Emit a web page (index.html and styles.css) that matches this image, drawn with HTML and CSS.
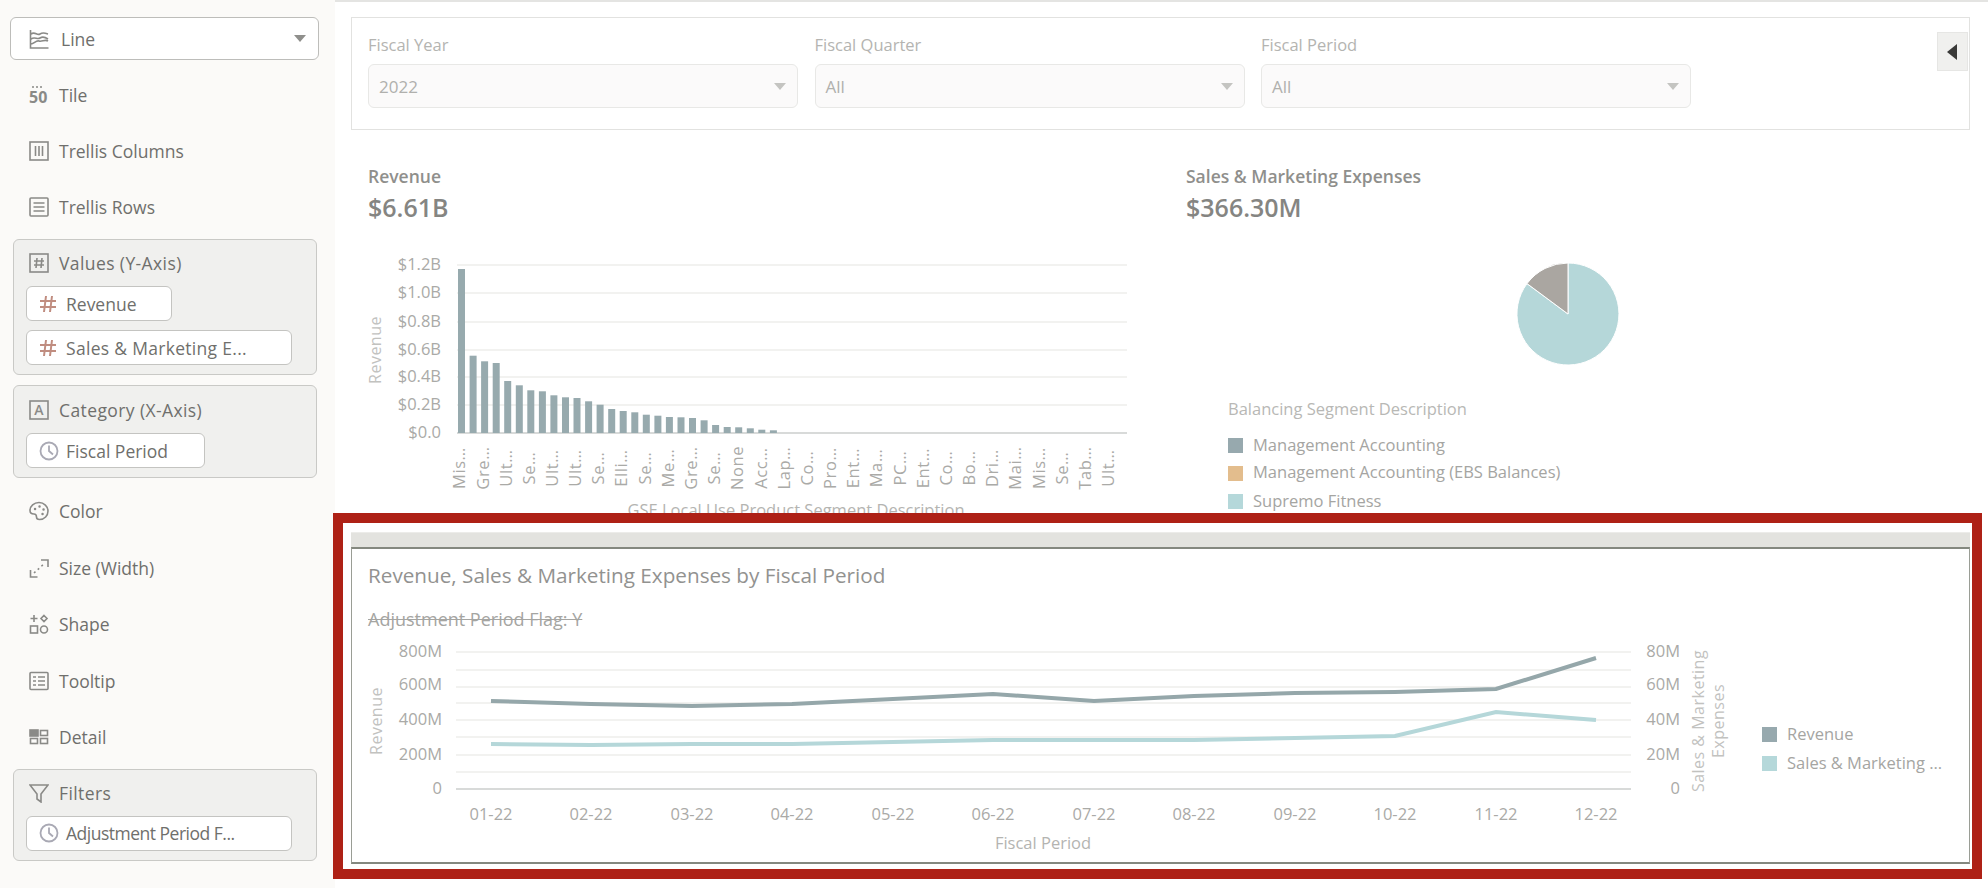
FILE: index.html
```html
<!DOCTYPE html>
<html>
<head>
  <title>Revenue Workbook</title>
  <link rel="stylesheet" href="styles.css">
</head>
<body>
  <aside class="sidebar">
    <div class="chart-type">
      <svg class="icon" viewBox="0 0 20 20"><path d="M1.500 1v18h18M2 5c4-3 6 2 9 0s5-1 8 0M2 10c4-3 6 1 9-1s5-1 8 1M2 15c3 0 5-4 8-3s6-2 9 0"/></svg>
      <span>Line</span>
      <i class="caret"></i>
    </div>
    <div class="item">
      <span class="icon-fifty">50</span>
      <span>Tile</span>
    </div>
    <div class="item">
      <svg class="icon" viewBox="0 0 20 20"><rect x="1" y="1" width="18" height="18"/><path d="M6.500 5v10M10 5v10M13.500 5v10"/></svg>
      <span>Trellis Columns</span>
    </div>
    <div class="item">
      <svg class="icon" viewBox="0 0 20 20"><rect x="1" y="1" width="18" height="18" rx="1"/><path d="M4.500 6h11M4.500 10h11M4.500 14h11"/></svg>
      <span>Trellis Rows</span>
    </div>
    <div class="group">
      <div class="group-head">
        <svg class="icon" viewBox="0 0 20 20"><rect x="1" y="1" width="18" height="18"/><path d="M8 5l-1 10M13 5l-1 10M5 8h10M5 12h10"/></svg>
        <span>Values (Y-Axis)</span>
      </div>
      <div class="chip chip-revenue">
        <svg class="chip-icon hash" viewBox="0 0 18 18"><path d="M7 1L5 17M13 1l-2 16M1 6h16M1 12h16"/></svg>
        <span>Revenue</span>
      </div>
      <div class="chip chip-wide">
        <svg class="chip-icon hash" viewBox="0 0 18 18"><path d="M7 1L5 17M13 1l-2 16M1 6h16M1 12h16"/></svg>
        <span class="chip-sales">Sales &amp; Marketing E...</span>
      </div>
    </div>
    <div class="group group-category">
      <div class="group-head">
        <svg class="icon" viewBox="0 0 20 20"><rect x="1" y="1" width="18" height="18"/><text class="icon-letter" x="10" y="15">A</text></svg>
        <span>Category (X-Axis)</span>
      </div>
      <div class="chip chip-period">
        <svg class="chip-icon clock" viewBox="0 0 20 20"><circle cx="10" cy="10" r="8.500"/><path d="M10 4.500V10l4 3.500"/></svg>
        <span>Fiscal Period</span>
      </div>
    </div>
    <div class="lower">
      <div class="item">
        <svg class="icon" viewBox="0 0 20 20"><path d="M10 1.500c-5 0-9 3.500-9 8 0 3 2 3.500 4 3.500 2.500 0 2.500 1.500 2.500 3 0 1.500 1 2.500 3 2.500 5 0 8.500-4 8.500-8.500S15 1.500 10 1.500z"/><path class="dots-thick" d="M6 8h.1M10.500 5.500h.1M14.500 8.500h.1M13.500 13h.1"/></svg>
        <span>Color</span>
      </div>
      <div class="item">
        <svg class="icon" viewBox="0 0 20 20"><path d="M1.500 12v7h7M12 2h7v7"/><path class="dash" d="M5 15L16 5"/></svg>
        <span>Size (Width)</span>
      </div>
      <div class="item">
        <svg class="icon" viewBox="0 0 20 20"><path d="M5 1v7M1.500 4.500h7M15 1.500l3 3-3 3-3-3z"/><rect x="1.500" y="12" width="7" height="7"/><circle cx="15" cy="15.500" r="3.500"/></svg>
        <span>Shape</span>
      </div>
      <div class="item">
        <svg class="icon" viewBox="0 0 20 20"><rect x="1" y="1.500" width="18" height="17" rx="1"/><path d="M4 6h3M9 6h7M4 10h3M9 10h7M4 14h3M9 14h7"/></svg>
        <span>Tooltip</span>
      </div>
      <div class="item">
        <svg class="icon" viewBox="0 0 20 20"><rect class="solid" x="1" y="3" width="8" height="6"/><rect x="11.500" y="3.500" width="7" height="5"/><rect x="1.500" y="11.500" width="7" height="5"/><rect x="11.500" y="11.500" width="7" height="5"/></svg>
        <span>Detail</span>
      </div>
    </div>
    <div class="group group-filters">
      <div class="group-head">
        <svg class="icon" viewBox="0 0 20 20"><path d="M1 2h18l-7 9v8l-4-3v-5z"/></svg>
        <span>Filters</span>
      </div>
      <div class="chip chip-wide">
        <svg class="chip-icon clock" viewBox="0 0 20 20"><circle cx="10" cy="10" r="8.500"/><path d="M10 4.500V10l4 3.500"/></svg>
        <span class="chip-adjust">Adjustment Period F...</span>
      </div>
    </div>
  </aside>

  <main class="main">
    <section class="canvas">
      <div class="filter-bar">
        <div class="field">
          <label>Fiscal Year</label>
          <div class="field-input"><span>2022</span><i class="caret"></i></div>
        </div>
        <div class="field">
          <label>Fiscal Quarter</label>
          <div class="field-input"><span>All</span><i class="caret"></i></div>
        </div>
        <div class="field">
          <label>Fiscal Period</label>
          <div class="field-input"><span>All</span><i class="caret"></i></div>
        </div>
        <div class="collapse"><i></i></div>
      </div>

      <div class="tiles">
        <div class="tile tile-left">
          <div class="tile-head">
            <div class="tile-name">Revenue</div>
            <div class="tile-value">$6.61B</div>
          </div>
          <svg class="chart" width="818" height="273" viewBox="351 240 818 273">
            <g class="grid">
              <path d="M457 265h670M457 293h670M457 322h670M457 350h670M457 377h670M457 405h670"/>
            </g>
            <path class="base" d="M457 433h670"/>
            <g class="bars">
              <rect x="458" y="269" width="7" height="164"/>
              <rect x="469.600" y="355.700" width="7" height="77.300"/>
              <rect x="481.100" y="361.300" width="7" height="71.700"/>
              <rect x="492.700" y="363" width="7" height="70"/>
              <rect x="504.200" y="381" width="7" height="52"/>
              <rect x="515.800" y="385.300" width="7" height="47.700"/>
              <rect x="527.300" y="390.300" width="7" height="42.700"/>
              <rect x="538.900" y="391.300" width="7" height="41.700"/>
              <rect x="550.400" y="395.300" width="7" height="37.700"/>
              <rect x="562" y="397.300" width="7" height="35.700"/>
              <rect x="573.500" y="398" width="7" height="35"/>
              <rect x="585.100" y="401.300" width="7" height="31.700"/>
              <rect x="596.600" y="404.700" width="7" height="28.300"/>
              <rect x="608.200" y="409" width="7" height="24"/>
              <rect x="619.700" y="411" width="7" height="22"/>
              <rect x="631.300" y="412.300" width="7" height="20.700"/>
              <rect x="642.800" y="414.700" width="7" height="18.300"/>
              <rect x="654.400" y="415.700" width="7" height="17.300"/>
              <rect x="665.900" y="417" width="7" height="16"/>
              <rect x="677.500" y="417.300" width="7" height="15.700"/>
              <rect x="689" y="418" width="7" height="15"/>
              <rect x="700.600" y="420.300" width="7" height="12.700"/>
              <rect x="712.100" y="425" width="7" height="8"/>
              <rect x="723.700" y="427" width="7" height="6"/>
              <rect x="735.200" y="427.300" width="7" height="5.700"/>
              <rect x="746.800" y="428.300" width="7" height="4.700"/>
              <rect x="758.300" y="429.700" width="7" height="3.300"/>
              <rect x="769.900" y="430.300" width="7" height="2.700"/>
            </g>
            <g class="tick end">
              <text x="441" y="270">$1.2B</text>
              <text x="441" y="298">$1.0B</text>
              <text x="441" y="327">$0.8B</text>
              <text x="441" y="355">$0.6B</text>
              <text x="441" y="382">$0.4B</text>
              <text x="441" y="410">$0.2B</text>
              <text x="441" y="438">$0.0</text>
            </g>
            <text class="axis-title mid" transform="translate(381 350) rotate(-90)">Revenue</text>
            <g class="tick mid rot">
              <text transform="translate(465 468) rotate(-90)">Mis…</text>
              <text transform="translate(489 468) rotate(-90)">Gre…</text>
              <text transform="translate(512 468) rotate(-90)">Ult…</text>
              <text transform="translate(535 468) rotate(-90)">Se…</text>
              <text transform="translate(558 468) rotate(-90)">Ult…</text>
              <text transform="translate(581 468) rotate(-90)">Ult…</text>
              <text transform="translate(604 468) rotate(-90)">Se…</text>
              <text transform="translate(627 468) rotate(-90)">Elli…</text>
              <text transform="translate(651 468) rotate(-90)">Se…</text>
              <text transform="translate(674 468) rotate(-90)">Me…</text>
              <text transform="translate(697 468) rotate(-90)">Gre…</text>
              <text transform="translate(720 468) rotate(-90)">Se…</text>
              <text transform="translate(743 468) rotate(-90)">None</text>
              <text transform="translate(767 468) rotate(-90)">Acc…</text>
              <text transform="translate(790 468) rotate(-90)">Lap…</text>
              <text transform="translate(813 468) rotate(-90)">Co…</text>
              <text transform="translate(836 468) rotate(-90)">Pro…</text>
              <text transform="translate(859 468) rotate(-90)">Ent…</text>
              <text transform="translate(882 468) rotate(-90)">Ma…</text>
              <text transform="translate(906 468) rotate(-90)">PC…</text>
              <text transform="translate(929 468) rotate(-90)">Ent…</text>
              <text transform="translate(952 468) rotate(-90)">Co…</text>
              <text transform="translate(975 468) rotate(-90)">Bo…</text>
              <text transform="translate(998 468) rotate(-90)">Dri…</text>
              <text transform="translate(1021 468) rotate(-90)">Mai…</text>
              <text transform="translate(1045 468) rotate(-90)">Mis…</text>
              <text transform="translate(1068 468) rotate(-90)">Se…</text>
              <text transform="translate(1091 468) rotate(-90)">Tab…</text>
              <text transform="translate(1114 468) rotate(-90)">Ult…</text>
            </g>
            <text class="axis-name mid" x="796" y="516">GSE Local Use Product Segment Description</text>
          </svg>
        </div>
        <div class="tile">
          <div class="tile-head">
            <div class="tile-name">Sales &amp; Marketing Expenses</div>
            <div class="tile-value">$366.30M</div>
          </div>
          <svg class="chart" width="801" height="273" viewBox="1169 240 801 273">
            <path class="pie-main" d="M1568 314L1568 263A51 51 0 1 1 1527 283.600Z"/>
            <path class="pie-other" d="M1568 314L1527 283.600A51 51 0 0 1 1568 263Z"/>
            <text class="legend-title" x="1228" y="415">Balancing Segment Description</text>
            <rect class="sw-revenue" x="1228" y="438" width="15" height="15"/>
            <text class="legend-text" x="1253" y="451">Management Accounting</text>
            <rect class="sw-ebs" x="1228" y="466" width="15" height="15"/>
            <text class="legend-text" x="1253" y="478">Management Accounting (EBS Balances)</text>
            <rect class="sw-sales" x="1228" y="494" width="15" height="15"/>
            <text class="legend-text" x="1253" y="507">Supremo Fitness</text>
          </svg>
        </div>
      </div>
    </section>

    <section class="highlight">
      <div class="band"></div>
      <div class="panel">
        <div class="panel-title">Revenue, Sales &amp; Marketing Expenses by Fiscal Period</div>
        <div class="panel-sub">Adjustment Period Flag: Y</div>
        <svg class="chart" width="1617" height="222" viewBox="352 640 1617 222">
          <g class="grid">
            <path d="M456 652h1175M456 670h1175M456 687h1175M456 703h1175M456 720h1175M456 737h1175M456 755h1175M456 772h1175"/>
          </g>
          <path class="base" d="M456 789h1175"/>
          <polyline class="line-revenue" points="491,701 591,704 692,706 792,704 893,699 993,694 1094,701 1194,696 1295,693 1395,692 1496,689 1596,658"/>
          <polyline class="line-sales" points="491,744 591,745 692,744 792,744 893,742 993,740 1094,740 1194,740 1295,738 1395,736 1496,712 1596,720"/>
          <g class="tick end">
            <text x="442" y="657">800M</text>
            <text x="442" y="690">600M</text>
            <text x="442" y="725">400M</text>
            <text x="442" y="760">200M</text>
            <text x="442" y="794">0</text>
          </g>
          <g class="tick end">
            <text x="1680" y="657">80M</text>
            <text x="1680" y="690">60M</text>
            <text x="1680" y="725">40M</text>
            <text x="1680" y="760">20M</text>
            <text x="1680" y="794">0</text>
          </g>
          <text class="axis-title mid" transform="translate(382 721) rotate(-90)">Revenue</text>
          <text class="axis-title mid" transform="translate(1704 721) rotate(-90)">Sales &amp; Marketing</text>
          <text class="axis-title mid" transform="translate(1724 721) rotate(-90)">Expenses</text>
          <g class="tick mid">
            <text x="491" y="820">01-22</text>
            <text x="591" y="820">02-22</text>
            <text x="692" y="820">03-22</text>
            <text x="792" y="820">04-22</text>
            <text x="893" y="820">05-22</text>
            <text x="993" y="820">06-22</text>
            <text x="1094" y="820">07-22</text>
            <text x="1194" y="820">08-22</text>
            <text x="1295" y="820">09-22</text>
            <text x="1395" y="820">10-22</text>
            <text x="1496" y="820">11-22</text>
            <text x="1596" y="820">12-22</text>
          </g>
          <text class="axis-name mid" x="1043" y="849">Fiscal Period</text>
          <rect class="sw-revenue" x="1762" y="727" width="15" height="15"/>
          <text class="legend-text" x="1787" y="740">Revenue</text>
          <rect class="sw-sales" x="1762" y="756" width="15" height="15"/>
          <text class="legend-text" x="1787" y="769">Sales &amp; Marketing ...</text>
        </svg>
      </div>
    </section>
  </main>
</body>
</html>
```

FILE: styles.css
```css
* {
  box-sizing: border-box;
}

body {
  margin: 0;
  width: 1988px;
  height: 888px;
  display: flex;
  overflow: hidden;
  background: #fff;
  font-family: "Open Sans", "Noto Sans", sans-serif;
  color: #6f6f6c;
}

/* left panel */
.sidebar {
  width: 335px;
  height: 888px;
  flex: none;
  padding-top: 17px;
  background: #fbfaf8;
  font-size: 17.500px;
}

.icon {
  width: 20px;
  height: 20px;
  flex: none;
  fill: none;
  stroke: #8a8a87;
  stroke-width: 1.600;
}

.icon .dots-thick {
  stroke-width: 2.400;
  stroke-linecap: round;
}

.icon .dash {
  stroke-dasharray: 2 3;
}

.icon .solid {
  fill: #8a8a87;
}

.icon-fifty {
  width: 20px;
  flex: none;
  font-size: 16px;
  font-weight: 700;
  line-height: 16px;
  color: #8a8a87;
}

.icon-fifty::before {
  content: "";
  display: block;
  width: 10px;
  margin: 0 0 1px 3px;
  border-top: 2px dotted #a5a5a2;
}

.icon-letter {
  font-size: 14px;
  font-weight: 600;
  fill: #8a8a87;
  stroke: none;
  text-anchor: middle;
}

.chart-type {
  width: 309px;
  height: 43px;
  margin-left: 10px;
  padding: 0 12px 0 18px;
  display: flex;
  align-items: center;
  gap: 12px;
  background: #fff;
  border: 1px solid #bdbdba;
  border-radius: 6px;
}

.caret {
  width: 0;
  height: 0;
  margin-left: auto;
  border-left: 6px solid transparent;
  border-right: 6px solid transparent;
  border-top: 7px solid #8f8f8c;
}

.item {
  height: 56px;
  padding-left: 29px;
  display: flex;
  align-items: center;
  gap: 10px;
}

.chart-type + .item {
  margin-top: 7px;
}

.lower {
  margin-top: 5px;
}

.lower .item {
  height: 56.500px;
}

.group {
  width: 304px;
  margin: 4px 0 0 13px;
  padding: 0 12px 9px;
  background: #f0f0ee;
  border: 1px solid #c9c9c6;
  border-radius: 6px;
}

.group-category {
  margin-top: 10px;
}

.group-filters {
  margin-top: 3px;
}

.group-head {
  height: 46px;
  padding-left: 3px;
  display: flex;
  align-items: center;
  gap: 10px;
  letter-spacing: .4px;
}

.group-category .group-head {
  height: 47px;
}

.chip {
  height: 35px;
  padding-left: 12px;
  display: flex;
  align-items: center;
  gap: 9px;
  background: #fff;
  border: 1px solid #c4c4c1;
  border-radius: 6px;
  white-space: nowrap;
}

.chip + .chip {
  margin-top: 9px;
}

.chip-revenue {
  width: 146px;
}

.chip-wide {
  width: 266px;
}

.chip-period {
  width: 179px;
}

.chip-sales {
  letter-spacing: .3px;
}

.chip-adjust {
  letter-spacing: -.5px;
}

.chip-icon {
  width: 18px;
  height: 18px;
  flex: none;
  fill: none;
}

.hash {
  stroke: #c08d80;
  stroke-width: 2;
}

.clock {
  width: 20px;
  height: 20px;
  margin-right: -2px;
  stroke: #a9a9b4;
  stroke-width: 1.800;
}

/* main area */
.main {
  width: 1653px;
  flex: none;
}

.canvas {
  height: 513px;
  padding: 15px 18px 0 16px;
  overflow: hidden;
  border-top: 2px solid #e4e4e2;
}

.filter-bar {
  position: relative;
  height: 113px;
  padding: 17px 0 0 16px;
  display: flex;
  gap: 16.500px;
  border: 1px solid #e2e2e0;
}

.field {
  width: 430px;
}

.field label {
  display: block;
  height: 20px;
  margin-bottom: 9px;
  font-size: 16.500px;
  line-height: 20px;
  color: #b4b4b1;
}

.field-input {
  height: 44px;
  padding: 0 11px 0 10px;
  display: flex;
  align-items: center;
  background: #fbfafa;
  border: 1px solid #e8e8e6;
  border-radius: 6px;
  font-size: 17px;
  color: #b0b0ad;
}

.field-input .caret {
  border-top-color: #c4c4c1;
}

.collapse {
  position: absolute;
  top: 14px;
  right: 1px;
  width: 31px;
  height: 39px;
  padding-left: 9px;
  display: flex;
  align-items: center;
  background: #f0f0ee;
  border: 1px solid #e6e6e4;
}

.collapse i {
  border-top: 8px solid transparent;
  border-bottom: 8px solid transparent;
  border-right: 10px solid #3a3a38;
}

.tiles {
  margin-top: 35px;
  display: flex;
}

.tile {
  flex: none;
}

.tile-left {
  width: 818px;
}

.tile-head {
  height: 75px;
  padding-left: 17px;
}

.tile-name {
  height: 22px;
  font-size: 17.500px;
  font-weight: 600;
  line-height: 22px;
  color: #8f8f8c;
}

.tile-value {
  height: 30px;
  margin-top: 5px;
  font-size: 25px;
  font-weight: 600;
  line-height: 30px;
  color: #858582;
}

/* chart parts */
.chart {
  display: block;
}

.grid path {
  fill: none;
  stroke: #eeeeec;
  stroke-width: 1.500;
}

.base {
  fill: none;
  stroke: #d8dad9;
  stroke-width: 2;
}

.bars rect {
  fill: #97aaae;
}

.tick text {
  font-size: 16.500px;
  fill: #aaaaa7;
}

.rot text {
  letter-spacing: .6px;
}

.end text {
  text-anchor: end;
}

.mid,
.mid text {
  text-anchor: middle;
}

.axis-title {
  font-size: 16px;
  letter-spacing: .5px;
  fill: #c2c2bf;
}

.axis-name {
  font-size: 16.500px;
  fill: #b4b4b1;
}

.legend-title {
  font-size: 16.500px;
  fill: #b8b8b5;
}

.legend-text {
  font-size: 16.500px;
  fill: #a5a5a2;
}

.pie-main {
  fill: #b5d7d9;
  stroke: #fff;
}

.pie-other {
  fill: #aaa6a1;
  stroke: #fff;
}

.sw-revenue {
  fill: #97a9ae;
}

.sw-ebs {
  fill: #e3bd8d;
}

.sw-sales {
  fill: #b5d8da;
}

.line-revenue,
.line-sales {
  fill: none;
  stroke-width: 4;
}

.line-revenue {
  stroke: #95a7aa;
}

.line-sales {
  stroke: #b5d7d9;
}

/* red frame around the lower chart */
.highlight {
  width: 1649px;
  height: 366px;
  margin-left: -2px;
  padding: 9px 2px 5px 8px;
  background: #fff;
  border: 10px solid #ae2116;
}

.band {
  height: 15px;
  background: #e3e3df;
  border-top: 1px solid #ecece9;
}

.panel {
  height: 317px;
  border: 1px solid #9a9d95;
  border-top: 2px solid #84887f;
  border-bottom: 2px solid #84887f;
}

.panel-title {
  height: 24px;
  margin: 14px 0 0 16px;
  font-size: 20.700px;
  line-height: 24px;
  color: #929290;
}

.panel-sub {
  height: 22px;
  margin: 21px 0 10px 16px;
  font-size: 18px;
  line-height: 22px;
  color: #a5a5a2;
  text-decoration: line-through;
}
```
